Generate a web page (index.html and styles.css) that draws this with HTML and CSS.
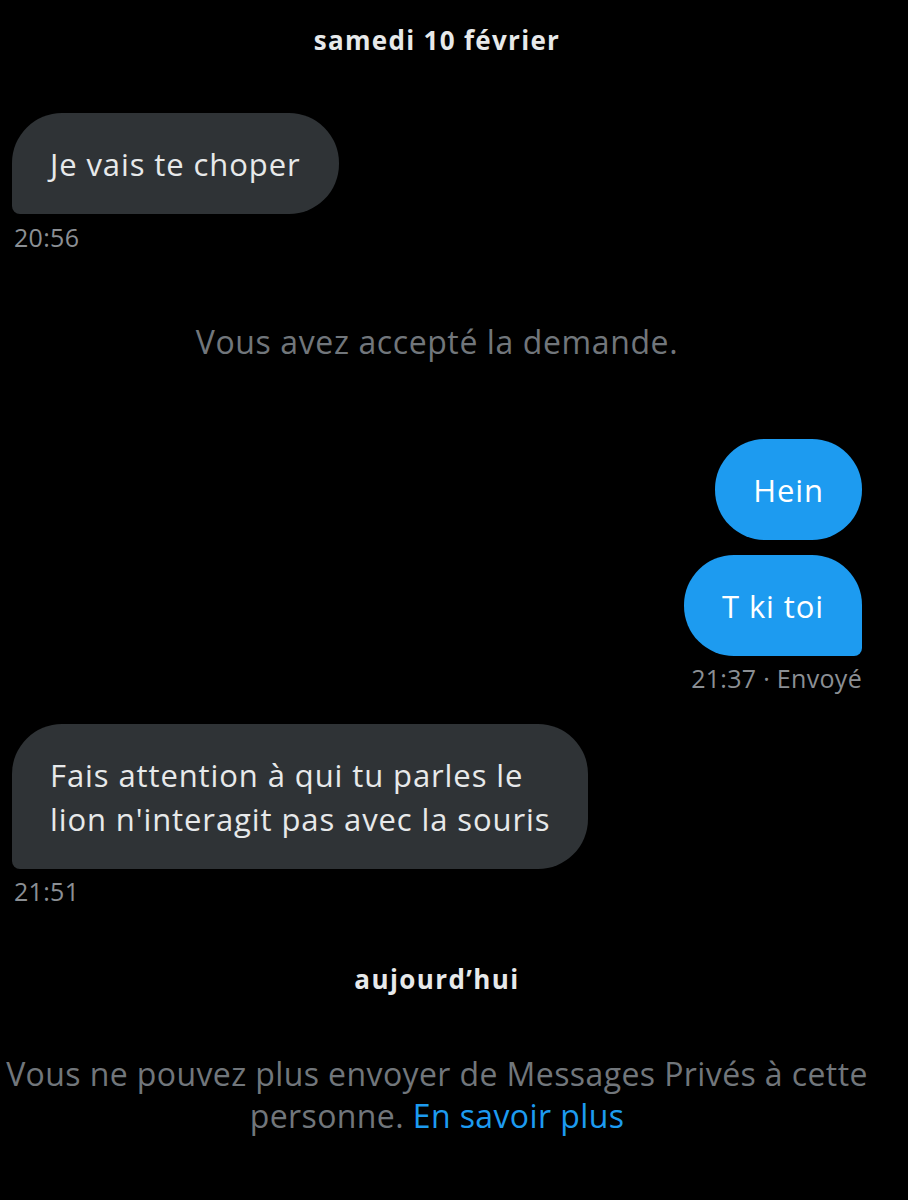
FILE: index.html
```html
<!DOCTYPE html>
<html lang="fr">
<head>
<meta charset="utf-8">
<link rel="stylesheet" href="styles.css">
</head>
<body>
<main class="thread">
  <div class="day">samedi 10 février</div>

  <div class="group in g1">
    <div class="bubble recv">Je vais te choper</div>
    <div class="meta">20:56</div>
  </div>

  <div class="system">Vous avez accepté la demande.</div>

  <div class="group out g2">
    <div class="bubble sent first">Hein</div>
    <div class="bubble sent last">T ki toi</div>
    <div class="meta">21:37 · Envoyé</div>
  </div>

  <div class="group in g3">
    <div class="bubble recv">Fais attention à qui tu parles le<br>lion n'interagit pas avec la souris</div>
    <div class="meta">21:51</div>
  </div>

  <div class="day today">aujourd’hui</div>

  <p class="notice">Vous ne pouvez plus envoyer de Messages Privés à cette<br>personne. <a class="link" href="#">En savoir plus</a></p>
</main>
</body>
</html>
```

FILE: styles.css
```css
html, body {
  margin: 0;
  padding: 0;
  background: #000;
}
body {
  font-family: "Open Sans", Roboto, "Liberation Sans", sans-serif;
  color: #e7e9ea;
  width: 908px;
  height: 1200px;
  overflow: hidden;
}
.thread {
  display: flex;
  flex-direction: column;
  padding: 22px 46px 0 12px;
}
.day {
  align-self: center;
  font-weight: 700;
  font-size: 26px;
  line-height: 36px;
  letter-spacing: 1.3px;
  color: #e7e9ea;
}
.group {
  display: flex;
  flex-direction: column;
}
.group.in { align-items: flex-start; }
.group.out { align-items: flex-end; }
.g1 { margin-top: 55px; }
.g2 { margin-top: 77px; }
.g3 { margin-top: 31px; }
.bubble {
  font-size: 31px;
  line-height: 44px;
  letter-spacing: 0.9px;
  padding: 28.5px 38px;
  border-radius: 50px;
}
.recv {
  background: #2f3336;
  color: #e7e9ea;
  border-bottom-left-radius: 8px;
}
.sent {
  background: #1d9bf0;
  color: #fff;
}
.sent.first { margin-bottom: 15px; }
.sent.last { border-bottom-right-radius: 8px; }
.meta {
  margin-top: 7px;
  font-size: 25px;
  line-height: 30px;
  letter-spacing: 0.3px;
  color: #8b8f94;
  padding-left: 2px;
}
.g1 .meta { margin-top: 8px; }
.out .meta { padding-left: 0; }
.system {
  align-self: center;
  margin-top: 70px;
  font-size: 32px;
  line-height: 40px;
  letter-spacing: 0.6px;
  color: #71767b;
}
.today { margin-top: 55px; letter-spacing: 1.4px; }
.notice {
  margin: 56px -20px 0 -20px;
  text-align: center;
  font-size: 32px;
  line-height: 42px;
  letter-spacing: 0.4px;
  color: #71767b;
  white-space: nowrap;
}
.link {
  color: #1d9bf0;
  text-decoration: none;
}
```
